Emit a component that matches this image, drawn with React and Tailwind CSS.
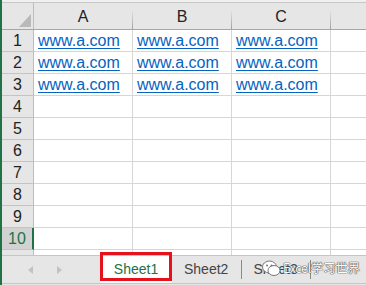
import React from "react";

const cols = ["A", "B", "C"];
const rows = [1, 2, 3, 4, 5, 6, 7, 8, 9, 10];

function HeaderCell({ label, wide }) {
    return (
        <div className={`flex ${wide ? "flex-1" : "w-[99px]"}`}>
            <div className="flex-1 flex items-center justify-center text-[16px] text-[#222] pt-[2px]">{label}</div>
            {!wide && <div className="w-px self-end h-[19px] bg-linear-to-b from-[#e6e6e6] to-[#a0a0a0]" />}
        </div>
    );
}

function Row({ n }) {
    const active = n === 10;
    const hasLink = n <= 3;
    return (
        <div className="flex h-[22px]">
            <div
                className={`w-[32px] flex items-center justify-center text-[16px] border-b border-[#c4c4c4] ${
                    active
                        ? "bg-[#d2d2d2] text-[#217346] border-r-2 border-r-[#217346]"
                        : "bg-[#e6e6e6] text-[#222] border-r border-r-[#bdbdbd]"
                }`}
            >
                {n}
            </div>
            {cols.map((c) => (
                <div key={c} className="w-[99px] border-r border-b border-[#d6d6d6] pl-[4px] flex items-center">
                    {hasLink && (
                        <span className="text-[16px] leading-[20px] text-[#0563c1] underline underline-offset-[2px]">
                            www.a.com
                        </span>
                    )}
                </div>
            ))}
            <div className="flex-1 border-b border-[#d6d6d6]" />
        </div>
    );
}

export default function App() {
    return (
        <div className="w-[366px] h-[285px] bg-white flex overflow-hidden relative font-['Liberation_Sans',Arial,sans-serif]">
            <div className="w-[2px] bg-[#217346]" />
            <div className="flex-1 flex flex-col">
                <div className="h-[3px] bg-[#f0f0f0] border-b border-[#c8c8c8]" />

                <div className="flex h-[27px] bg-[#e6e6e6] border-b border-[#a6a6a6]">
                    <div className="w-[32px] flex items-end justify-end pr-[2px] pb-[2px] border-r border-[#bdbdbd]">
                        <svg width="12" height="13" viewBox="0 0 12 13">
                            <polygon points="12,0 12,13 0,13" fill="#b9b9b9" />
                        </svg>
                    </div>
                    {cols.map((c) => (
                        <HeaderCell key={c} label={c} />
                    ))}
                    <HeaderCell label="" wide />
                </div>

                {rows.map((n) => (
                    <Row key={n} n={n} />
                ))}

                <div className="flex h-[5px]">
                    <div className="w-[32px] bg-[#e6e6e6] border-r border-[#bdbdbd]" />
                    {cols.map((c) => (
                        <div key={c} className="w-[99px] border-r border-[#d6d6d6]" />
                    ))}
                    <div className="flex-1" />
                </div>

                <div className="h-[28px] bg-[#e6e6e6] border-t border-[#c6c6c6] flex items-stretch text-[14px]">
                    <div className="w-[98px] flex items-center pl-[26px] gap-[24px]">
                        <svg width="5" height="8" viewBox="0 0 5 8">
                            <polygon points="5,0 5,8 0,4" fill="#c2c2c2" />
                        </svg>
                        <svg width="5" height="8" viewBox="0 0 5 8">
                            <polygon points="0,0 0,8 5,4" fill="#c2c2c2" />
                        </svg>
                    </div>
                    <div className="relative w-[72px] bg-white flex items-center justify-center text-[#217346]">
                        Sheet1
                        <div className="absolute left-0 right-0 -top-[4px] bottom-[2px] border-[3px] border-[#e5121c]" />
                    </div>
                    <div className="flex items-center pl-[12px] text-[#444]">Sheet2</div>
                    <div className="flex items-center pl-[13px]">
                        <div className="w-px h-[19px] bg-[#8a8a8a]" />
                    </div>
                    <div className="flex items-center pl-[11px] text-[#444]">Sheet3</div>
                    <div className="flex items-center pl-[12px]">
                        <div className="w-px h-[19px] bg-[#8a8a8a]" />
                    </div>
                </div>
                <div className="flex-1 border-t border-[#c6c6c6] bg-[#e6e6e6]" />
            </div>

            <div className="absolute left-[262px] top-[259px] flex items-center gap-[2px] whitespace-nowrap text-[12.5px] text-white [text-shadow:0_0_1px_#444,0_0_1px_#444,0_0_1px_#444] font-['Noto_Sans_CJK_SC',sans-serif]">
                <svg width="19" height="17" viewBox="0 0 19 17">
                    <ellipse cx="7.5" cy="7" rx="7" ry="6" fill="#fff" stroke="#777" strokeWidth="1" />
                    <ellipse cx="12" cy="10.5" rx="6" ry="5" fill="#fff" stroke="#777" strokeWidth="1" />
                    <circle cx="5" cy="5.5" r="1" fill="#777" />
                    <circle cx="9.5" cy="5.5" r="1" fill="#777" />
                </svg>
                <span className="tracking-[-0.3px]">Excel学习世界</span>
            </div>
        </div>
    );
}
